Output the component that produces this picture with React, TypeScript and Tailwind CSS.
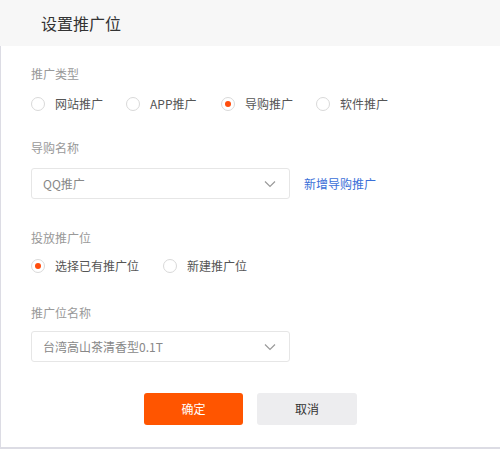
import { useState } from "react";

type RadioProps = {
  label: string;
  checked: boolean;
  onClick: () => void;
};

function Radio({ label, checked, onClick }: RadioProps) {
  return (
    <div className="flex items-center cursor-pointer" onClick={onClick}>
      <span className="w-[14px] h-[14px] rounded-full border border-[#d9d9d9] bg-white flex items-center justify-center">
        {checked && <span className="w-[6px] h-[6px] rounded-full bg-[#ff4d0d]" />}
      </span>
      <span className="ml-[10px] text-[12px] text-[#555]">{label}</span>
    </div>
  );
}

function Chevron() {
  return (
    <svg width="12" height="8" viewBox="0 0 12 8" fill="none">
      <path d="M1 1.5 L6 6.5 L11 1.5" stroke="#9a9a9a" strokeWidth="1.2" />
    </svg>
  );
}

function Select({ value }: { value: string }) {
  return (
    <div className="w-[259px] h-[31px] border border-[#e6e6e6] rounded-[3px] flex items-center justify-between pl-[11px] pr-[13px] bg-white">
      <span className="text-[12px] text-[#888]">{value}</span>
      <Chevron />
    </div>
  );
}

export default function App() {
  const [type, setType] = useState(2);
  const [slot, setSlot] = useState(0);

  return (
    <div className="w-[500px] h-[449px] bg-white flex flex-col" style={{ fontFamily: '"Noto Sans CJK SC", "Liberation Sans", sans-serif' }}>
      <div className="h-[46px] bg-[#f7f7f7] flex items-center pl-[41px] shrink-0">
        <h1 className="text-[16px] text-[#333]">设置推广位</h1>
      </div>

      <div className="flex-1 border-l border-b-2 border-[#dcdce4] pl-[30px] flex flex-col">
        <div className="mt-[19px] text-[12px] text-[#999] leading-[18px]">推广类型</div>
        <div className="mt-[11px] flex items-center gap-[19px] h-[20px]">
          {["网站推广", "APP推广", "导购推广", "软件推广"].map((l, i) => (
            <div key={l} className="w-[76px]">
              <Radio label={l} checked={type === i} onClick={() => setType(i)} />
            </div>
          ))}
        </div>

        <div className="mt-[25px] text-[12px] text-[#999] leading-[18px]">导购名称</div>
        <div className="mt-[11px] flex items-center">
          <Select value="QQ推广" />
          <a className="ml-[14px] text-[12px] text-[#3a6fd8] cursor-pointer">新增导购推广</a>
        </div>

        <div className="mt-[30px] text-[12px] text-[#999] leading-[18px]">投放推广位</div>
        <div className="mt-[9px] flex items-center gap-[24px] h-[20px]">
          <Radio label="选择已有推广位" checked={slot === 0} onClick={() => setSlot(0)} />
          <Radio label="新建推广位" checked={slot === 1} onClick={() => setSlot(1)} />
        </div>

        <div className="mt-[28px] text-[12px] text-[#999] leading-[18px]">推广位名称</div>
        <div className="mt-[9px]">
          <Select value="台湾高山茶清香型0.1T" />
        </div>

        <div className="mt-[31px] flex gap-[14px] pl-[113px]">
          <button type="button" className="w-[99px] h-[32px] rounded-[3px] bg-[#ff5500] text-white text-[12px]">确定</button>
          <button type="button" className="w-[100px] h-[32px] rounded-[3px] bg-[#ededef] text-[#333] text-[12px]">取消</button>
        </div>
      </div>
    </div>
  );
}
